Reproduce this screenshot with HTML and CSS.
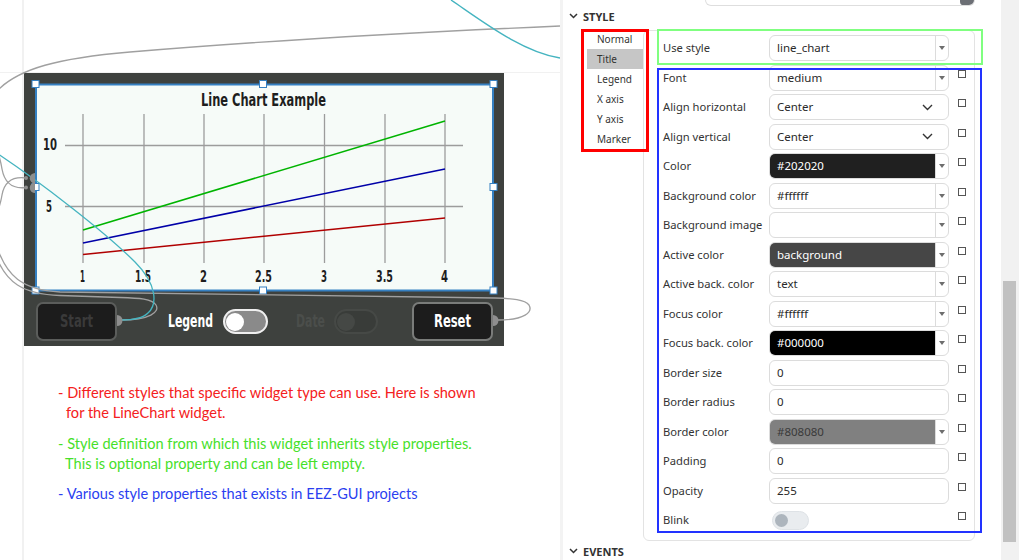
FILE: index.html
```html
<!DOCTYPE html>
<html>
<head>
<meta charset="utf-8">
<title>EEZ Studio - Style</title>
<link rel="stylesheet" href="styles.css">
</head>
<body>
<div class="app">
  <div class="canvas">
    <div class="widget">
      <svg class="chart" width="459" height="208" viewBox="35 83 459 208">
        <rect class="chart-bg" x="36" y="84" width="457" height="206"/>
        <g class="grid">
          <line x1="83" y1="114" x2="83" y2="263"/>
          <line x1="144" y1="114" x2="144" y2="263"/>
          <line x1="204" y1="114" x2="204" y2="263"/>
          <line x1="264" y1="114" x2="264" y2="263"/>
          <line x1="324.5" y1="114" x2="324.5" y2="263"/>
          <line x1="385" y1="114" x2="385" y2="263"/>
          <line x1="445" y1="114" x2="445" y2="263"/>
          <line x1="65" y1="145.5" x2="463" y2="145.5"/>
          <line x1="65" y1="206.5" x2="463" y2="206.5"/>
        </g>
        <line class="s-green" x1="83" y1="230" x2="445" y2="121"/>
        <line class="s-blue" x1="83" y1="243" x2="445" y2="169"/>
        <line class="s-red" x1="83" y1="254.5" x2="445" y2="218"/>
        <text class="ttl" x="201" y="106" textLength="125" lengthAdjust="spacingAndGlyphs">Line Chart Example</text>
        <text class="ax" x="43" y="150" textLength="14" lengthAdjust="spacingAndGlyphs">10</text>
        <text class="ax" x="46" y="212" textLength="6" lengthAdjust="spacingAndGlyphs">5</text>
        <text class="ax" x="80" y="282" textLength="5" lengthAdjust="spacingAndGlyphs">1</text>
        <text class="ax" x="135" y="282" textLength="16" lengthAdjust="spacingAndGlyphs">1.5</text>
        <text class="ax" x="200" y="282" textLength="7" lengthAdjust="spacingAndGlyphs">2</text>
        <text class="ax" x="255" y="282" textLength="17" lengthAdjust="spacingAndGlyphs">2.5</text>
        <text class="ax" x="321" y="282" textLength="6" lengthAdjust="spacingAndGlyphs">3</text>
        <text class="ax" x="376" y="282" textLength="17" lengthAdjust="spacingAndGlyphs">3.5</text>
        <text class="ax" x="441" y="282" textLength="7" lengthAdjust="spacingAndGlyphs">4</text>
        <rect class="sel-frame" x="36" y="84.5" width="457" height="206"/>
        <g class="handles">
          <rect x="32" y="80.5" width="7" height="7"/>
          <rect x="259.5" y="80.5" width="7" height="7"/>
          <rect x="490" y="80.5" width="7" height="7"/>
          <rect x="32" y="183.5" width="7" height="7"/>
          <rect x="490" y="183.5" width="7" height="7"/>
          <rect x="32" y="287" width="7" height="7"/>
          <rect x="259.5" y="287" width="7" height="7"/>
          <rect x="490" y="287" width="7" height="7"/>
        </g>
      </svg>
      <div class="controls">
        <div class="btn btn-start">
          <svg class="wt wt-dim" width="33" height="21" viewBox="0 0 33 21"><text x="0" y="16" textLength="33" lengthAdjust="spacingAndGlyphs">Start</text></svg>
        </div>
        <svg class="wt wt-light lbl-legend" width="45" height="21" viewBox="0 0 45 21"><text x="0" y="16" textLength="45" lengthAdjust="spacingAndGlyphs">Legend</text></svg>
        <div class="tg tg-on"><span class="knob"></span></div>
        <svg class="wt wt-off lbl-date" width="29" height="21" viewBox="0 0 29 21"><text x="0" y="16" textLength="29" lengthAdjust="spacingAndGlyphs">Date</text></svg>
        <div class="tg tg-off"><span class="knob"></span></div>
        <div class="btn btn-reset">
          <svg class="wt wt-light" width="37" height="21" viewBox="0 0 37 21"><text x="0" y="16" textLength="37" lengthAdjust="spacingAndGlyphs">Reset</text></svg>
        </div>
      </div>
    </div>

    <div class="notes">
      <p class="note note-red">- Different styles that specific widget type can use. Here is shown<br>for the LineChart widget.</p>
      <p class="note note-green">- Style definition from which this widget inherits style properties.<br>This is optional property and can be left empty.</p>
      <p class="note note-blue">- Various style properties that exists in EEZ-GUI projects</p>
    </div>

    <svg class="wires" width="560" height="560" viewBox="0 0 560 560">
      <g class="wire-gray">
        <path d="M560 26 C420 32, 250 42, 130 52 C60 58, 18 68, -4 92"/>
        <path d="M121 320 C150 320, 160 312, 156 305 C152 299, 140 298, 120 297.5 L60 295.5 C22 294, 6 282, -4 256"/>
        <path d="M498 320 C525 320, 533 312, 529 305 C525 299.5, 512 298.5, 495 298 L60 292 C22 290, 6 276, -4 244"/>
        <path d="M26 178 C10 176, 4 184, 2 195 C1 201, 0 206, -3 212"/>
        <path d="M26 187.5 C10 189.5, 4 180, 2 169 C1 163, 0 158, -3 150"/>
      </g>
      <g class="wire-teal">
        <path d="M451 0 C482 21, 522 52, 560 58"/>
        <path d="M-2 154 C40 182, 105 232, 135 262 C158 285, 157 305, 148 313 C142 319, 132 320, 121 320"/>
      </g>
      <g class="ports">
        <path d="M35 173 A5 5 0 0 0 35 183.5 Z"/>
        <path d="M35 182.5 A5 5 0 0 0 35 193 Z"/>
        <circle cx="26" cy="178" r="2"/>
        <circle cx="26" cy="187.5" r="2"/>
        <path d="M117 315 A5 5 0 0 1 117 326 Z"/>
        <path d="M493 315 A5 5 0 0 1 493 326 Z"/>
      </g>
    </svg>
  </div>

  <div class="panel">
    <div class="top-input"><span class="top-knob"></span></div>
    <div class="sec-head">
      <svg class="sec-chev" viewBox="0 0 9 6"><path d="M1 1L4.5 4.5L8 1"/></svg>
      <span>STYLE</span>
    </div>
    <div class="style-body">
      <ul class="style-list">
        <li>Normal</li>
        <li class="sel">Title</li>
        <li>Legend</li>
        <li>X axis</li>
        <li>Y axis</li>
        <li>Marker</li>
      </ul>
      <div class="props">
        <div class="row"><span class="lbl">Use style</span><div class="inp"><span class="val">line_chart</span><span class="dd"><svg class="caret" viewBox="0 0 6 4"><path d="M0 0H6L3 4Z"/></svg></span></div></div>
        <div class="row"><span class="lbl">Font</span><div class="inp"><span class="val">medium</span><span class="dd"><svg class="caret" viewBox="0 0 6 4"><path d="M0 0H6L3 4Z"/></svg></span></div><span class="cb"></span></div>
        <div class="row"><span class="lbl">Align horizontal</span><div class="inp"><span class="val">Center</span><svg class="chev" viewBox="0 0 11 7"><path d="M1 1L5.5 5.5L10 1"/></svg></div><span class="cb"></span></div>
        <div class="row"><span class="lbl">Align vertical</span><div class="inp"><span class="val">Center</span><svg class="chev" viewBox="0 0 11 7"><path d="M1 1L5.5 5.5L10 1"/></svg></div><span class="cb"></span></div>
        <div class="row"><span class="lbl">Color</span><div class="inp"><span class="val fill-202020">#202020</span><span class="dd"><svg class="caret" viewBox="0 0 6 4"><path d="M0 0H6L3 4Z"/></svg></span></div><span class="cb"></span></div>
        <div class="row"><span class="lbl">Background color</span><div class="inp"><span class="val">#ffffff</span><span class="dd"><svg class="caret" viewBox="0 0 6 4"><path d="M0 0H6L3 4Z"/></svg></span></div><span class="cb"></span></div>
        <div class="row"><span class="lbl">Background image</span><div class="inp"><span class="val"></span><span class="dd"><svg class="caret" viewBox="0 0 6 4"><path d="M0 0H6L3 4Z"/></svg></span></div><span class="cb"></span></div>
        <div class="row"><span class="lbl">Active color</span><div class="inp"><span class="val fill-bg">background</span><span class="dd"><svg class="caret" viewBox="0 0 6 4"><path d="M0 0H6L3 4Z"/></svg></span></div><span class="cb"></span></div>
        <div class="row"><span class="lbl">Active back. color</span><div class="inp"><span class="val">text</span><span class="dd"><svg class="caret" viewBox="0 0 6 4"><path d="M0 0H6L3 4Z"/></svg></span></div><span class="cb"></span></div>
        <div class="row"><span class="lbl">Focus color</span><div class="inp"><span class="val">#ffffff</span><span class="dd"><svg class="caret" viewBox="0 0 6 4"><path d="M0 0H6L3 4Z"/></svg></span></div><span class="cb"></span></div>
        <div class="row"><span class="lbl">Focus back. color</span><div class="inp"><span class="val fill-000000">#000000</span><span class="dd"><svg class="caret" viewBox="0 0 6 4"><path d="M0 0H6L3 4Z"/></svg></span></div><span class="cb"></span></div>
        <div class="row"><span class="lbl">Border size</span><div class="inp"><span class="val">0</span></div><span class="cb"></span></div>
        <div class="row"><span class="lbl">Border radius</span><div class="inp"><span class="val">0</span></div><span class="cb"></span></div>
        <div class="row"><span class="lbl">Border color</span><div class="inp"><span class="val fill-808080">#808080</span><span class="dd"><svg class="caret" viewBox="0 0 6 4"><path d="M0 0H6L3 4Z"/></svg></span></div><span class="cb"></span></div>
        <div class="row"><span class="lbl">Padding</span><div class="inp"><span class="val">0</span></div><span class="cb"></span></div>
        <div class="row"><span class="lbl">Opacity</span><div class="inp"><span class="val">255</span></div><span class="cb"></span></div>
        <div class="row"><span class="lbl">Blink</span><div class="inp-free"><span class="sw"><span class="sw-knob"></span></span></div><span class="cb"></span></div>
      </div>
    </div>
    <div class="sec-head events">
      <svg class="sec-chev" viewBox="0 0 9 6"><path d="M1 1L4.5 4.5L8 1"/></svg>
      <span>EVENTS</span>
    </div>

    <div class="mark mark-red"></div>
    <div class="mark mark-green"></div>
    <div class="mark mark-blue"></div>
  </div>

  <div class="scroll"><div class="thumb"></div></div>
</div>
</body>
</html>
```

FILE: styles.css
```css
* { box-sizing: border-box; }
html, body { margin: 0; padding: 0; }
body {
  width: 1019px;
  height: 560px;
  overflow: hidden;
  background: #ffffff;
  font-family: "Noto Sans", "Open Sans", sans-serif;
  color: #333333;
}
.app { display: flex; height: 560px; }

/* ---------- canvas ---------- */
.canvas {
  position: relative;
  flex: none;
  width: 560px;
  height: 560px;
  padding: 73px 0 0 24px;
  background:
    linear-gradient(#f1f1f1, #f1f1f1) 22px 0 / 2px 100% no-repeat,
    linear-gradient(#f1f1f1, #f1f1f1) 0 72px / 100% 1px no-repeat,
    #ffffff;
}
.widget {
  width: 480px;
  height: 273px;
  background: #3e413e;
  padding: 10px 0 0 11px;
}
.chart { display: block; overflow: visible; }
.chart-bg { fill: #f6fbf8; }
.grid line { stroke: #9c9c9c; stroke-width: 1.3; }
.s-green { stroke: #00b400; stroke-width: 1.6; }
.s-blue { stroke: #0000a8; stroke-width: 1.6; }
.s-red { stroke: #b00000; stroke-width: 1.6; }
.chart text { font-family: "DejaVu Sans", sans-serif; font-weight: bold; fill: #1e1e1e; }
.chart .ttl { font-size: 18px; }
.chart .ax { font-size: 15px; }
.sel-frame { fill: none; stroke: #3580c2; stroke-width: 2; }
.handles rect { fill: #ffffff; stroke: #3580c2; stroke-width: 1; }

.controls {
  display: flex;
  align-items: center;
  height: 39px;
  margin-top: 11px;
}
.btn {
  flex: none;
  width: 81px;
  height: 39px;
  background: #1c1c1c;
  border: 2px solid #5b5d5b;
  border-radius: 7px;
  display: flex;
  align-items: center;
  justify-content: center;
}
.btn-start { margin-left: 1px; }
.btn-reset { margin-left: 34px; border-color: #7a7c7a; }
.wt { display: block; flex: none; overflow: visible; }
.wt text { font-family: "DejaVu Sans", sans-serif; font-weight: bold; font-size: 18px; }
.wt-dim text { fill: #3a3a3a; }
.wt-light text { fill: #ffffff; }
.wt-off text { fill: #4b4e4b; }
.lbl-legend { margin-left: 51px; }
.lbl-date { margin-left: 28px; }
.tg {
  flex: none;
  width: 45px;
  height: 25px;
  border-radius: 13px;
  padding: 1px;
  display: flex;
  align-items: center;
}
.tg .knob { width: 18px; height: 18px; border-radius: 50%; }
.tg-on { margin-left: 10px; background: #8a8a8a; border: 2px solid #efefef; }
.tg-on .knob { background: #ffffff; }
.tg-off { margin-left: 9px; width: 44px; background: #393c39; border: 2px solid #464946; }
.tg-off .knob { background: #454845; }

.notes {
  margin: 37px 0 0 34px;
  font-family: Lato, "Open Sans", sans-serif;
  font-size: 14.6px;
  line-height: 20px;
  white-space: nowrap;
}
.note { margin: 0; }
.note-red { color: #f42020; padding-left: 8px; text-indent: -8px; }
.note-green { color: #46e02a; padding-left: 7px; text-indent: -7px; margin-top: 11px; }
.note-blue { color: #2b3ff0; margin-top: 10px; }

.wires {
  position: absolute;
  left: 0;
  top: 0;
  overflow: visible;
  pointer-events: none;
}
.wire-gray path { fill: none; stroke: #a0a0a0; stroke-width: 1.3; }
.wire-teal path { fill: none; stroke: #45b4c0; stroke-width: 1.3; }
.ports path, .ports circle { fill: #8e8e8e; }

/* ---------- panel ---------- */
.panel {
  position: relative;
  flex: none;
  width: 441px;
  height: 560px;
  border-left: 3px solid #f3f3f3;
  background: #ffffff;
}
.top-input {
  margin-left: 142px;
  width: 270px;
  height: 6px;
  border: 1px solid #dedede;
  border-top: none;
  border-radius: 0 0 6px 6px;
  display: flex;
  justify-content: flex-end;
}
.top-knob {
  width: 14px;
  height: 5px;
  background: #6c6f75;
  border-radius: 0 0 6px 4px;
}
.sec-head {
  display: flex;
  align-items: center;
  gap: 5px;
  height: 16px;
  margin-top: 2px;
  padding-left: 6px;
  font-size: 11px;
  font-weight: bold;
  color: #333333;
}
.sec-chev { width: 9px; height: 6px; fill: none; stroke: #333333; stroke-width: 1.5; }
.events { margin-top: 2px; }

.style-body {
  display: flex;
  width: 388px;
  margin: 5px 0 0 24px;
}
.style-list {
  flex: none;
  width: 56px;
  margin: 0;
  padding: 0;
  list-style: none;
  font-size: 10px;
  color: #333333;
}
.style-list li { height: 20px; line-height: 20px; padding-left: 10px; }
.style-list li.sel { background: #c6c6c6; }

.props {
  flex: 1;
  margin-top: 1px;
  border: 1px solid #e3e3e3;
  border-radius: 6px;
  padding: 4px 0 7px 19px;
}
.row {
  display: flex;
  align-items: flex-start;
  height: 26px;
  margin-bottom: 3.5px;
}
.row:last-child { margin-bottom: 0; }
.lbl {
  flex: none;
  width: 106px;
  font-size: 11.2px;
  line-height: 26px;
  color: #333333;
  white-space: nowrap;
}
.inp {
  flex: none;
  width: 180px;
  height: 26px;
  border: 1px solid #dcdcdc;
  border-radius: 6px;
  display: flex;
  overflow: hidden;
  font-size: 11.5px;
  color: #2a2a2a;
}
.inp .val {
  flex: 1;
  padding-left: 7px;
  line-height: 24px;
  white-space: nowrap;
}
.inp .dd {
  flex: none;
  width: 13px;
  border-left: 1px solid #dcdcdc;
  display: flex;
  align-items: center;
  justify-content: center;
}
.caret { width: 6px; height: 4px; fill: #6d6d6d; }
.chev {
  flex: none;
  align-self: center;
  width: 11px;
  height: 7px;
  margin-right: 15px;
  fill: none;
  stroke: #333333;
  stroke-width: 1.4;
}
.fill-202020 { background: #202020; color: #ffffff; }
.fill-bg { background: #464646; color: #ffffff; }
.fill-000000 { background: #000000; color: #ffffff; }
.fill-808080 { background: #808080; color: #3a3a3a; }
.inp-free { flex: none; width: 180px; height: 26px; }
.sw {
  display: flex;
  align-items: center;
  width: 37px;
  height: 19px;
  margin: 4px 0 0 3px;
  border-radius: 10px;
  background: #e9ecef;
  border: 1px solid #dee2e6;
  padding-left: 2px;
}
.sw-knob { width: 13px; height: 13px; border-radius: 50%; background: #adb5bd; }
.cb {
  flex: none;
  width: 8px;
  height: 8px;
  margin: 5px 0 0 9px;
  border: 1px solid #555555;
}

.mark { position: absolute; border-style: solid; }
.mark-red { left: 18px; top: 29px; width: 68px; height: 123px; border-width: 3px; border-color: #ff0000; }
.mark-green { left: 94px; top: 29px; width: 326px; height: 36px; border-width: 2px; border-color: #80ff80; }
.mark-blue { left: 94px; top: 68px; width: 325px; height: 465px; border-width: 2.5px; border-color: #2233ff; }

/* ---------- scrollbar ---------- */
.scroll {
  flex: none;
  width: 18px;
  height: 560px;
  background: #f1f1f1;
  padding: 281px 0 0 2px;
}
.thumb { width: 13px; height: 261px; background: #c1c1c1; }
```
